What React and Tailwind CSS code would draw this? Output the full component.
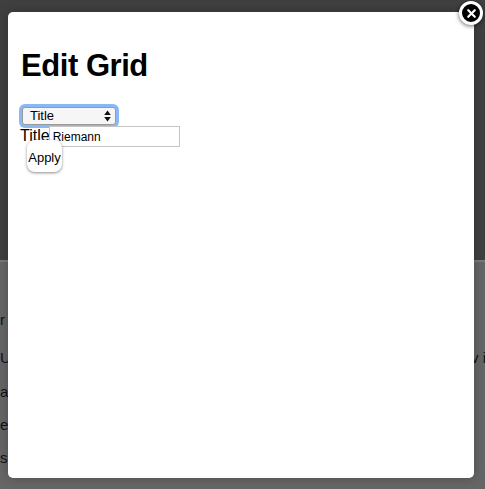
import { X } from "lucide-react";

const rows = [
  { left: "r", right: "", top: "pt-[46px]" },
  { left: "U", right: "v i", top: "pt-[14px]" },
  { left: "ar", right: "", top: "pt-[10px]" },
  { left: "e", right: "", top: "pt-[9px]" },
  { left: "s", right: "", top: "pt-[9px]" },
];

export default function App() {
  return (
    <div className="relative h-[489px] w-[485px] overflow-hidden bg-[#404040] font-['Liberation_Sans',Arial,sans-serif]">
      <div className="h-[260px]" />
      <div className="h-[229px] border-t-2 border-[#7a7a7a] bg-[#666666] text-[15px] leading-[24px] text-[#111]">
        {rows.map((row, i) => (
          <div key={i} className={`flex justify-between ${row.top}`}>
            <span>{row.left}</span>
            <span className="mr-[-1px]">{row.right}</span>
          </div>
        ))}
      </div>

      <div className="absolute left-2 top-3 h-[466px] w-[466px] rounded-[5px] bg-white pl-[13px] pt-[38px] shadow-[0_0_12px_rgba(0,0,0,0.25)]">
        <h1 className="text-[31px] font-bold leading-[32px] tracking-[-0.45px] text-black">
          Edit Grid
        </h1>
        <div className="ml-[1px] mt-[25px] flex h-[18px] w-[94px] items-center justify-between rounded-[3px] border border-[#9a9a9a] bg-[#f6f6f6] pl-[7px] pr-[4px] text-[13px] text-black shadow-[0_0_0_3px_#8ab8f5]">
          <span>Title</span>
          <svg width="7" height="12" viewBox="0 0 7 12">
            <path d="M3.5 0.5L6.8 5H0.2ZM3.5 11.5L0.2 7H6.8Z" fill="#111" />
          </svg>
        </div>
        <div className="relative -ml-[1px] mt-[2px] flex h-[20px] items-end">
          <span className="mb-[1px] text-[16px] leading-[20px] text-black">Title</span>
          <div className="-ml-[1px] flex h-[21px] w-[131px] items-center border border-[#c4c4c4] bg-white pl-[3px] text-[12px] text-black">
            Riemann
          </div>
        </div>
        <button className="relative ml-[6px] -mt-[7px] flex h-[32px] w-[35px] items-center justify-center rounded-[8px] bg-white pt-[3px] text-[13px] text-black shadow-[0_1px_3px_rgba(0,0,0,0.45)]">
          Apply
        </button>
      </div>

      <div className="absolute left-[459px] top-[1px] flex h-[24px] w-[24px] items-center justify-center rounded-full border-[3px] border-white bg-black shadow-[0_1px_4px_rgba(0,0,0,0.6)]">
        <X size={13} strokeWidth={4} color="#fff" />
      </div>
    </div>
  );
}
